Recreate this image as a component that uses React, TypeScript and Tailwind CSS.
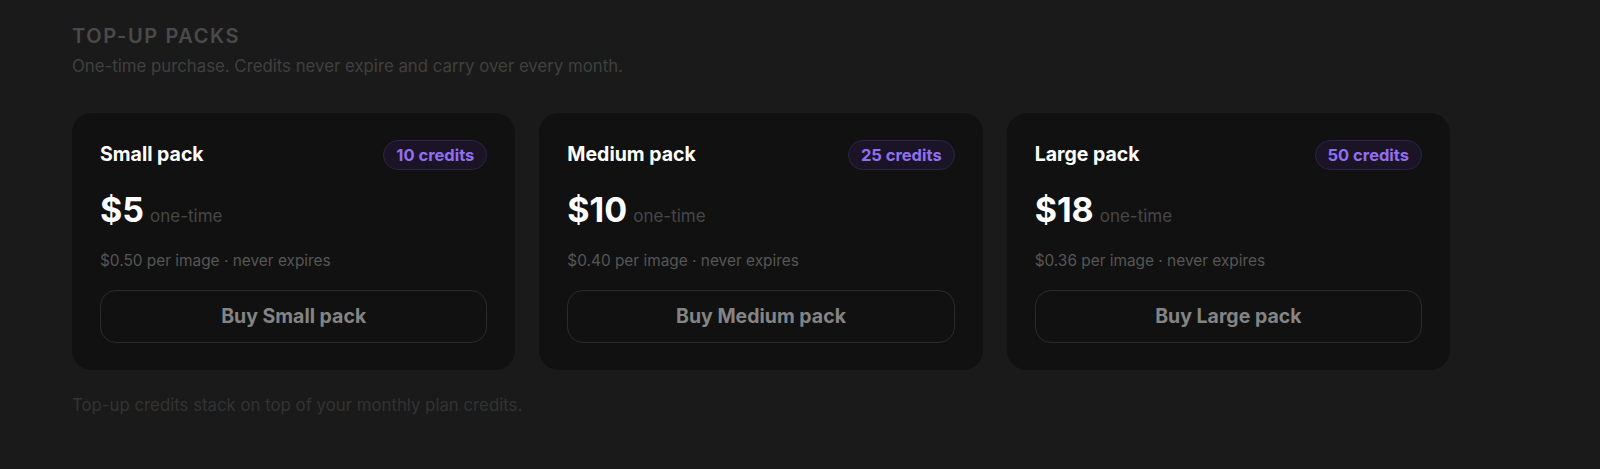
const packs = [
  { name: "Small pack", credits: 10, price: "$5", per: "$0.50" },
  { name: "Medium pack", credits: 25, price: "$10", per: "$0.40" },
  { name: "Large pack", credits: 50, price: "$18", per: "$0.36" },
];

export default function App() {
  return (
    <main
      className="w-full h-[469px] bg-[#1a1a1a] px-[72px] pt-[24px]"
      style={{ fontFamily: "Inter, 'Noto Sans', sans-serif" }}
    >
      {/* Header */}
      <h2 className="text-[20px] font-semibold uppercase tracking-[0.08em] text-[#4a4a4a] leading-6">
        Top-up packs
      </h2>
      <p className="text-[16.8px] text-[#404040] mt-[6px] leading-6">
        One-time purchase. Credits never expire and carry over every month.
      </p>

      {/* Cards */}
      <div className="grid grid-cols-3 gap-6 w-[1378px] mt-[35px]">
        {packs.map((p) => (
          <div
            key={p.name}
            className="bg-[#111111] rounded-[20px] pt-[27px] px-[28px] pb-[27px]"
          >
            <div className="flex items-center justify-between h-[30px]">
              <h3 className="text-[19.5px] font-bold text-white">{p.name}</h3>
              <span className="h-[30px] px-[12px] flex items-center rounded-full bg-[#1b1427] border border-[#2e2247] text-[16.5px] font-bold text-[#906ff0]">
                {p.credits} credits
              </span>
            </div>

            <div className="flex items-baseline gap-[6px] mt-[20px]">
              <span className="text-[34px] font-bold text-white leading-[40px]">
                {p.price}
              </span>
              <span className="text-[17px] text-[#474747]">one-time</span>
            </div>

            <p className="text-[15.4px] text-[#565656] mt-[21px] leading-5">
              {p.per} per image · never expires
            </p>

            <button className="w-full h-[53px] mt-[19px] rounded-[16px] border border-[#2b2b2b] text-[19.5px] font-bold text-[#848484]">
              Buy {p.name}
            </button>
          </div>
        ))}
      </div>

      <p className="text-[16.8px] text-[#333333] mt-[23px] leading-6">
        Top-up credits stack on top of your monthly plan credits.
      </p>
    </main>
  );
}
